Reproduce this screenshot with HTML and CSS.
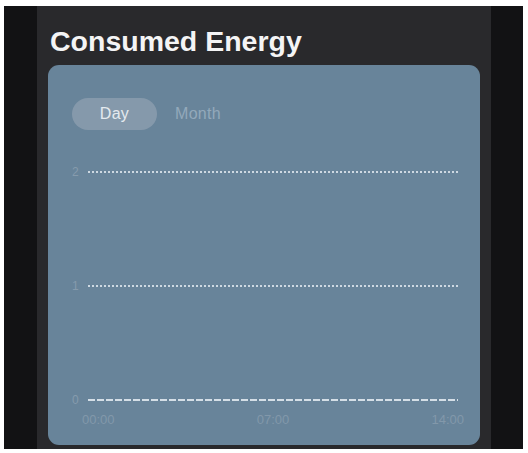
FILE: index.html
```html
<!DOCTYPE html>
<html>
<head>
<meta charset="utf-8">
<link rel="stylesheet" href="styles.css">
</head>
<body>
<div class="frame">
  <div class="band band-left"></div>
  <div class="panel">
    <h1 class="title">Consumed Energy</h1>
    <div class="card">
      <div class="toggle">
        <div class="tab tab-active">Day</div>
        <div class="tab">Month</div>
      </div>
      <div class="chart">
        <div class="row"><span class="ylabel">2</span><span class="line dotted"></span></div>
        <div class="row"><span class="ylabel">1</span><span class="line dotted"></span></div>
        <div class="row"><span class="ylabel">0</span><span class="line dashed"></span></div>
      </div>
      <div class="xlabels">
        <span>00:00</span>
        <span>07:00</span>
        <span>14:00</span>
      </div>
    </div>
  </div>
  <div class="band band-right"></div>
</div>
</body>
</html>
```
FILE: styles.css
```css
html, body {
  margin: 0;
  padding: 0;
  background: #ffffff;
}
body {
  font-family: "Liberation Sans", Arial, sans-serif;
}
.frame {
  margin: 6px 5px 0 4px;
  width: 519px;
  height: 443px;
  display: flex;
  background: #121214;
}
.band {
  background: #121214;
}
.band-left { width: 33px; }
.band-right { width: 32px; }
.panel {
  flex: 1;
  background: #29292c;
  padding: 0 11px 4px 11px;
  display: flex;
  flex-direction: column;
}
.title {
  margin: 0;
  height: 59px;
  padding-top: 18px;
  box-sizing: border-box;
  padding-left: 2px;
  font-size: 28.5px;
  line-height: 34px;
  font-weight: 700;
  color: #f4f4f5;
}
.card {
  flex: 1;
  background: #68849a;
  border-radius: 11px;
  padding: 33px 22px 0 24px;
  display: flex;
  flex-direction: column;
}
.toggle {
  display: flex;
  align-items: center;
  height: 32px;
}
.tab {
  height: 32px;
  line-height: 32px;
  font-size: 16px;
  letter-spacing: 0.3px;
  color: #93a9ba;
}
.tab-active {
  width: 85px;
  text-align: center;
  border-radius: 16px;
  background: #8599ab;
  color: #e4eaef;
  margin-right: 18px;
}
.chart {
  margin-top: 35px;
  height: 242px;
  display: flex;
  flex-direction: column;
  justify-content: space-between;
}
.row {
  display: flex;
  align-items: center;
  height: 14px;
}
.ylabel {
  width: 16px;
  font-size: 12px;
  color: #869bad;
}
.line {
  flex: 1;
  height: 2px;
}
.dotted {
  background: repeating-linear-gradient(to right, rgba(240,245,250,0.75) 0 2px, transparent 2px 4px);
}
.dashed {
  background: repeating-linear-gradient(to right, rgba(240,245,250,0.8) 0 7px, transparent 7px 9px);
}
.xlabels {
  margin-top: 6px;
  margin-left: 10px;
  margin-right: -6px;
  display: flex;
  justify-content: space-between;
  font-size: 13px;
  height: 14px;
  line-height: 14px;
  color: #8298aa;
}
```
